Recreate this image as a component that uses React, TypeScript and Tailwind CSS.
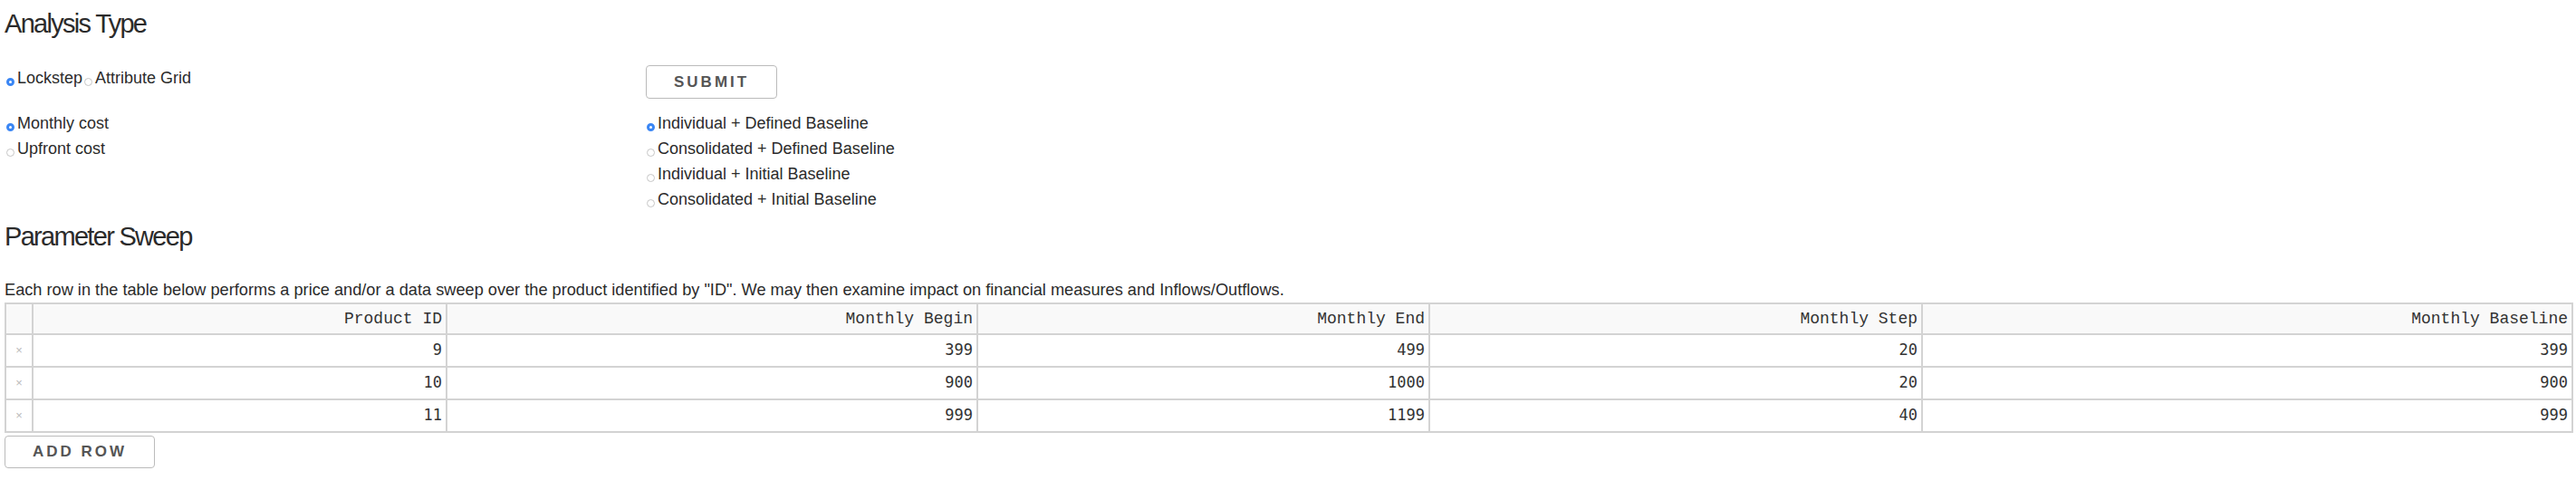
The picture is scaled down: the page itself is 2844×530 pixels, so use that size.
import React from "react";

interface RadioProps {
	label: string;
	checked?: boolean;
	block?: boolean;
}

const Radio: React.FC<RadioProps> = (props) => {
	return (
		<label className={props.block ? "block" : "inline"}>
			{props.checked ? (
				<span className="inline-block w-[9px] h-[9px] rounded-full border-[3px] border-[#3a86f4] bg-white align-[-3px] ml-[2px] mr-[3px]" />
			) : (
				<span className="inline-block w-[9px] h-[9px] rounded-full border border-[#c6c6c6] bg-white align-[-3px] ml-[2px] mr-[3px]" />
			)}
			{props.label}
		</label>
	);
};

const columns = [
	{ title: "Product ID", field: "id", width: 457 },
	{ title: "Monthly Begin", field: "begin", width: 586 },
	{ title: "Monthly End", field: "end", width: 499 },
	{ title: "Monthly Step", field: "step", width: 544 },
	{ title: "Monthly Baseline", field: "baseline", width: 718 },
];

const rows: Array<Record<string, number>> = [
	{ id: 9, begin: 399, end: 499, step: 20, baseline: 399 },
	{ id: 10, begin: 900, end: 1000, step: 20, baseline: 900 },
	{ id: 11, begin: 999, end: 1199, step: 40, baseline: 999 },
];

export default function App() {
	return (
		<div className="min-h-screen bg-white px-[5px] text-[#2b2b2b] font-['Liberation_Sans',Arial,sans-serif]">
			<h2 className="pt-[9px] text-[29px] leading-[34px] tracking-[-1.7px]">Analysis Type</h2>

			<div className="mt-[29px] grid grid-cols-[708px_1fr]">
				<div className="text-[18px] leading-[28px]">
					<Radio label="Lockstep" checked />
					<Radio label="Attribute Grid" />
				</div>
				<div>
					<button className="h-[37px] px-[30px] rounded-[4px] border border-[#bbb] bg-white text-[17px] font-semibold tracking-[3px] text-[#555] uppercase">
						Submit
					</button>
				</div>
			</div>

			<div className="mt-[13px] grid grid-cols-[708px_1fr] text-[18px] leading-[28px]">
				<div>
					<Radio label="Monthly cost" checked block />
					<Radio label="Upfront cost" block />
				</div>
				<div className="-ml-[1px]">
					<Radio label="Individual + Defined Baseline" checked block />
					<Radio label="Consolidated + Defined Baseline" block />
					<Radio label="Individual + Initial Baseline" block />
					<Radio label="Consolidated + Initial Baseline" block />
				</div>
			</div>

			<h2 className="mt-[10px] text-[29px] leading-[34px] tracking-[-1.7px]">Parameter Sweep</h2>

			<p className="mt-[31px] text-[18.2px] leading-[22px]">
				Each row in the table below performs a price and/or a data sweep over the product identified by "ID". We may then examine impact on financial measures and Inflows/Outflows.
			</p>

			<table className="mt-[3px] w-full table-fixed border-collapse border-2 border-[#d3d3d3]">
				<colgroup>
					<col className="w-[30px]" />
					{columns.map((col) => (
						<col key={col.field} style={{ width: `${col.width}px` }} />
					))}
				</colgroup>
				<thead>
					<tr className="bg-[#f9f9f9] h-[34px]">
						<th className="border-2 border-[#d3d3d3]"></th>
						{columns.map((col) => (
							<th
								key={col.field}
								className="border-2 border-[#d3d3d3] px-[4px] text-right font-normal text-[18px] text-[#333] font-['Courier_New','Liberation_Mono',monospace]"
							>
								{col.title}
							</th>
						))}
					</tr>
				</thead>
				<tbody>
					{rows.map((row, i) => (
						<tr className="h-[36px]" key={i}>
							<td className="border-2 border-[#d3d3d3] text-center text-[13px] text-[#bbb]">×</td>
							{columns.map((col, j) => (
								<td
									key={j}
									className="border-2 border-[#d3d3d3] px-[4px] text-right text-[17px] text-[#333] font-['DejaVu_Sans_Mono',monospace]"
								>
									{row[col.field]}
								</td>
							))}
						</tr>
					))}
				</tbody>
			</table>

			<button className="mt-[3px] h-[36px] px-[30px] rounded-[4px] border border-[#bbb] bg-white text-[17px] font-semibold tracking-[3px] text-[#555] uppercase">
				Add Row
			</button>
		</div>
	);
}
